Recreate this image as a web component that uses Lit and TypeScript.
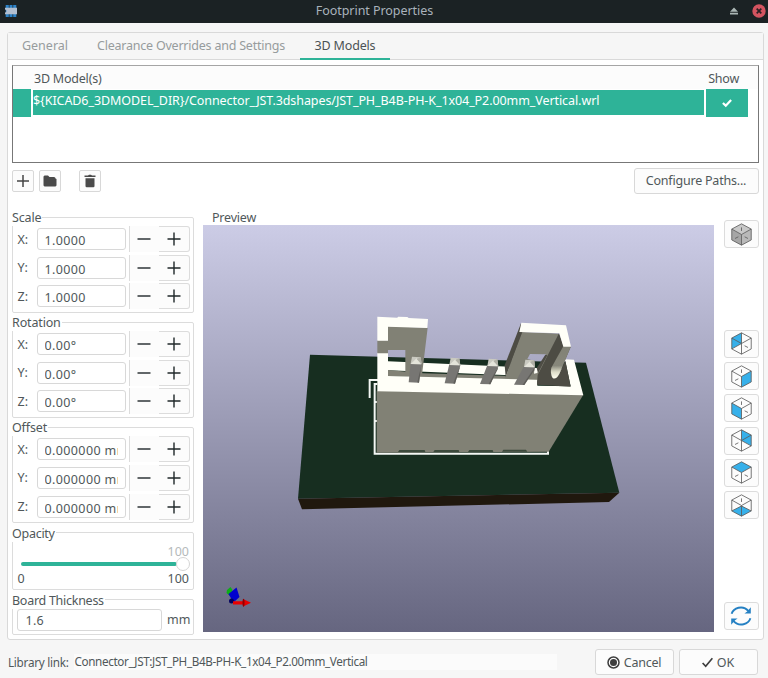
import { LitElement, html, svg, css } from "lit";
import { customElement, property } from "lit/decorators.js";

type Face = "solid" | "backLeft" | "right" | "left" | "backRight" | "top" | "bottom" | "refresh";

const FACES: Record<string, string> = {
  backLeft: "M.7 5.8 10 .8V11L.7 16Z",
  right: "M10 11 19.3 5.8V16.2L10 21.2Z",
  left: "M.7 5.8 10 11V21.2L.7 16.2Z",
  backRight: "M10 .8 19.3 5.8V16L10 11Z",
  top: "M10 .8 19.3 5.8 10 11 .7 5.8Z",
  bottom: "M.7 16.2 10 11.5 19.3 16.2 10 21.2Z",
};
const TOP_MARK = "M10 4.2V7.6";
const LEFT_MARK = "M3.800 14.800 7 13.200";
const RIGHT_MARK = "M16.200 14.800 13 13.200";
const MARKS: Record<string, string> = {
  solid: TOP_MARK + LEFT_MARK + RIGHT_MARK,
  backLeft: RIGHT_MARK,
  right: TOP_MARK + LEFT_MARK,
  left: TOP_MARK + RIGHT_MARK,
  backRight: LEFT_MARK,
  top: LEFT_MARK + RIGHT_MARK,
  bottom: TOP_MARK,
};
const FRONT_EDGES = "M.7 5.8 10 11 19.3 5.8M10 11V21.2";
const BACK_EDGES: Record<string, string> = {
  backLeft: "M.7 16.2 10 11V.8",
  backRight: "M19.3 16.2 10 11V.8",
  bottom: "M.7 16.2 10 11.500 19.3 16.2",
};

@customElement("view-button")
class ViewButton extends LitElement {
  @property() face: Face = "solid";
  static styles = css`
    :host { display: block; }
    .btn { box-sizing: border-box; width: 35px; height: 28px; border: 1px solid #dcdcdc; border-radius: 3px; background: #fcfcfc; display: flex; align-items: center; justify-content: center; }
    .edge { fill: none; stroke: #5c5c5c; stroke-width: 0.8; stroke-linejoin: round; }
    .mark { fill: none; stroke: #5c5c5c; stroke-width: 0.8; }
    .blue { fill: #36b0ea; }
    .lt { fill: #c8c8c8; }
    .md { fill: #a6a6a6; }
    .dk { fill: #b9b9b9; }
    .arc { fill: none; stroke: #2580c3; stroke-width: 1.9; }
    .tip { fill: #2580c3; }
  `;
  render() {
    if (this.face === "refresh") {
      return html`<div class="btn"><svg width="22" height="22" viewBox="0 0 22 22">
        <path class="arc" d="M1.6 8.8C3.4 3.2 12.5-.8 18.6 6.2M20.4 13.2C18.6 18.8 9.5 22.8 3.4 15.8" />
        <path class="tip" d="M20.8 2.2V8.4H14.4L17.2 6.6ZM1.2 19.8V13.6H7.6L4.8 15.4Z" />
      </svg></div>`;
    }
    const back = BACK_EDGES[this.face];
    return html`<div class="btn"><svg width="21" height="23" viewBox="0 0 20 22">
      ${this.face === "solid"
        ? svg`<path class="lt" d=${FACES.top}/><path class="md" d=${FACES.left}/><path class="dk" d=${FACES.right}/>`
        : svg`<path class="blue" d=${FACES[this.face]}/>`}
      <path class="edge" d="M10 .8 19.3 5.8V16.2L10 21.2 .7 16.2V5.8Z" />
      <path class="edge" d=${FRONT_EDGES} />
      ${back ? svg`<path class="edge" d=${back}/>` : ""}
      <path class="mark" d=${MARKS[this.face]} />
    </svg></div>`;
  }
}

@customElement("axis-group")
class AxisGroup extends LitElement {
  @property() label = "";
  @property() value = "";
  static styles = css`
    :host { display: block; }
    fieldset { box-sizing: border-box; width: 182px; height: 104.5px; margin: 0; padding: 0; border: 1px solid #dcdcdc; border-radius: 2px; min-width: 0; }
    legend { padding: 0 1px 0 0; margin-left: -0.5px; height: 18px; line-height: 20px; letter-spacing: -0.15px; }
    .rows { display: flex; flex-direction: column; gap: 2.6px; }
    .row { display: flex; height: 26px; align-items: center; }
    .axis { width: 19px; margin-left: 5px; line-height: 19px; }
    .field { box-sizing: border-box; width: 89px; height: 22px; border: 1px solid #d8d8d8; border-radius: 3px; background: #fff; padding: 0 7px; line-height: 23.5px; letter-spacing: 0.38px; }
    .clip { overflow: hidden; white-space: nowrap; height: 20px; }
    .step { box-sizing: border-box; height: 26px; display: flex; align-items: center; justify-content: center; background: #fcfcfc; }
    .minus { width: 30px; margin-left: 3px; border-left: 1px solid #dcdcdc; }
    .plus { width: 31px; border: 1px solid #dcdcdc; border-left: 0; border-radius: 0 3px 3px 0; }
    path { stroke: #20282a; stroke-width: 1.4; }
  `;
  render() {
    return html`<fieldset><legend>${this.label}</legend><div class="rows">
      ${["X:", "Y:", "Z:"].map((a) => html`<div class="row">
        <span class="axis">${a}</span>
        <div class="field"><div class="clip">${this.value}</div></div>
        <div class="step minus"><svg width="14" height="14"><path d="M.5 7H13.5" /></svg></div>
        <div class="step plus"><svg width="14" height="14"><path d="M.5 7H13.5M7 .5V13.5" /></svg></div>
      </div>`)}
    </div></fieldset>`;
  }
}

@customElement("model-preview")
class ModelPreview extends LitElement {
  static styles = css`
    :host { display: block; width: 511.5px; height: 407px; background: linear-gradient(#cccce6, #666680); }
    svg { display: block; }
    .board { fill: #172e20; }
    .side { fill: #20180e; }
    .white { fill: #fffff8; }
    .grey { fill: #818175; }
    .dark { fill: #4d4c44; }
    .pin { fill: #777673; }
    .pinside { fill: #5f5e5a; }
    .tip { fill: #c9c9c0; }
    .tiphi { fill: #e4e4da; }
    .tiplo { fill: #b0b0a6; }
    .silk { fill: none; stroke: #f4f7f4; stroke-width: 6; }
    .shade { fill: #3c4a3c; }
  `;
  pin(tx: number, ty: number, bx: number, by: number) {
    return svg`
      <path class="pin" d="M${tx} ${ty + 20}L${tx + 33} ${ty + 22}L${bx + 31} ${by + 1}L${bx} ${by}Z"/>
      <path class="pinside" d="M${tx + 33} ${ty + 22}L${tx + 31} ${ty + 32}L${bx + 31} ${by + 1}L${bx + 26} ${by}Z"/>
      <path class="tip" d="M${tx + 4} ${ty}L${tx + 30} ${ty + 2}L${tx + 33} ${ty + 23}L${tx} ${ty + 22}Z"/>
      <path class="tiphi" d="M${tx + 18} ${ty + 5}L${tx + 31} ${ty + 23}L${tx} ${ty + 22}Z"/>
      <path class="tiplo" d="M${tx + 30} ${ty + 2}L${tx + 18} ${ty + 7}L${tx + 33} ${ty + 23}Z"/>`;
  }
  render() {
    return html`<svg width="511.5" height="407" viewBox="203 225 511.5 407">
      <defs><linearGradient id="tongue" x1="0" y1="0" x2="0" y2="1">
        <stop offset="0" stop-color="#818175" /><stop offset=".6" stop-color="#87877b" /><stop offset=".8" stop-color="#ddddc8" /><stop offset="1" stop-color="#fffff0" />
      </linearGradient></defs>
      <g transform="translate(290 300) scale(.33333)">
        <path class="board" d="M60 164 888 188 988 578 24 596Z" />
        <path class="side" d="M24 596 988 578 957 606 36 628Z" />
        <path class="silk" d="M239 294V240H264M262 252H254V461H774V444M254 306H262M254 363H262" />
        <path class="grey" d="M260 272 880 284 776 455 260 458Z" />
        <path class="shade" d="M328 450H404L406 456H324ZM434 450H506L508 456H430ZM538 450H608L610 456H534ZM640 449H708L712 455H636Z" />
        <path class="white" d="M294 184 826 208 824 232 294 211Z" />
        <path class="grey" d="M294 210 400 220 760 231V242L294 229Z" />
        <path class="white" d="M262 158H294V228L742 239 742 257 842 259 825 178 852 179 880 286 262 274Z" />
        <path class="grey" d="M262 121H294V79L413 83 396 224 346 220V150H294V160H262Z" />
        <path class="white" d="M262 50 322 53 324 50 352 51 356 54 414 57 412 84 294 80V122H262Z" />
        <path class="dark" d="M693 70 699 97 647 232 644 196Z" />
        <path class="grey" fill-rule="evenodd" d="M697 96 808 101 742 238 645 235ZM720 162 768 163 742 219 732 221 735 183 712 177Z" />
        <path class="dark" d="M766 164 772 166 744 219 740 204Z" />
        <path class="dark" d="M807 100 821 139 843 139 806 225 826 182 842 260 741 254 743 225Z" />
        <path fill="url(#tongue)" d="M820 139 843 139 808 222Q798 240 788 234Q780 222 784 203Z" />
        <path class="white" d="M694 68 828 76 843 140 820 140 808 100 688 96Z" />
        ${this.pin(362, 170, 356, 247)}${this.pin(478, 173, 464, 250)}${this.pin(592, 176, 570, 252)}${this.pin(702, 179, 672, 254)}
      </g>
      <path fill="#0cae16" d="M227 590 230.500 587 232.500 590 230 596 226.500 593Z" />
      <path fill="#0000cf" d="M228.500 594 236.500 587.500 239.500 597 233.500 602.500Z" />
      <circle cx="231.500" cy="601" r="2.500" fill="#00005f" />
      <path fill="#e80000" d="M233 601.300H243V599L251 602.700 243 606.500V604.500H233Z" />
      <ellipse cx="243.500" cy="602.700" rx="1" ry="4" fill="#8d0000" />
    </svg>`;
  }
}

@customElement("app-root")
class AppRoot extends LitElement {
  static styles = css`
    :host { display: flex; flex-direction: column; width: 768px; height: 678px; overflow: hidden; background: #f6f6f6; color: #50585a; font: 12.5px/18px "Noto Sans", sans-serif; white-space: nowrap; }
    .title { display: flex; align-items: center; height: 22.5px; background: #1b2224; color: #a9b2bc; }
    .title .chip { margin-left: 5px; }
    .title .name { flex: 1; text-align: center; padding-left: 2px; letter-spacing: -0.05px; line-height: 20px; margin-top: -0.5px; }
    .title .eject { margin-right: 14px; margin-left: 0; }
    .title .close { margin-right: 2px; }
    .book { box-sizing: border-box; width: 757.5px; height: 608px; margin: 9.5px 0 0 6.500px; border: 1px solid #d9d9d9; border-radius: 3px; background: #fff; }
    .tabs { display: flex; height: 26px; background: #f6f6f6; border-bottom: 1px solid #d9d9d9; color: #979c9d; line-height: 25px; }
    .tab { box-sizing: border-box; height: 27px; text-align: center; }
    .t1 { width: 75px; }
    .t2 { width: 217px; letter-spacing: -0.22px; }
    .t3 { width: 90px; margin-left: 0.500px; border-bottom: 2px solid #2eb398; color: #4b5254; letter-spacing: -0.17px; }
    .body { padding: 4.500px 4px 0; }
    .grid { box-sizing: border-box; width: 747px; height: 98.500px; border: 1px solid #777; border-top-color: #a5a5a5; background: #fff; }
    .head { display: flex; justify-content: space-between; height: 23px; line-height: 25px; background: #fcfcfc; padding: 0 18.500px 0 21.500px; letter-spacing: -0.22px; }
    .sel { display: flex; height: 28px; gap: 2px; align-items: center; color: #fff; }
    .sel > * { background: #2eb398; }
    .c1 { width: 18.500px; height: 28px; }
    .c2 { width: 671px; height: 24.500px; line-height: 21px; letter-spacing: -0.077px; }
    .c3 { width: 41.500px; height: 28px; display: flex; align-items: center; justify-content: center; }
    .tools { display: flex; align-items: center; height: 26px; margin-top: 4.500px; width: 747px; }
    .tool { box-sizing: border-box; width: 22px; height: 22px; border: 1px solid #d8d8d8; border-radius: 2px; background: #fcfcfc; display: flex; align-items: center; justify-content: center; margin-right: 5px; }
    .trash { margin-left: 13.500px; }
    .btn { box-sizing: border-box; height: 26px; border: 1px solid #d8d8d8; border-radius: 3px; background: #fcfcfc; display: flex; align-items: center; justify-content: center; gap: 3.500px; padding-top: 1.500px; }
    .btn svg { margin-top: -1px; }
    .paths { width: 125px; margin-left: auto; letter-spacing: -0.21px; }
    .main { display: flex; margin-top: 14.500px; }
    .side { display: flex; flex-direction: column; gap: 0.700px; width: 182px; }
    fieldset { box-sizing: border-box; width: 182px; margin: 0; padding: 0; border: 1px solid #dcdcdc; border-radius: 2px; min-width: 0; }
    legend { padding: 0 1px 0 0; margin-left: -0.5px; height: 18px; line-height: 20px; letter-spacing: -0.27px; }
    .opacity { height: 66.500px; }
    .board { height: 44px; }
    .nums { display: flex; justify-content: space-between; padding: 0 3.500px 0 5px; line-height: 20px; height: 18px; }
    .now { justify-content: flex-end; color: #b5babb; }
    .slider { display: flex; align-items: center; height: 9px; padding-left: 8px; }
    .fill { width: 156px; height: 4px; border-radius: 2px; background: #2eb398; }
    .knob { box-sizing: border-box; width: 14px; height: 14px; margin-left: -1px; border: 1px solid #d5d5d5; border-radius: 50%; background: #fff; }
    .thick { display: flex; align-items: center; gap: 5.500px; padding-left: 4px; margin-top: -1px; height: 24px; }
    .input { box-sizing: border-box; width: 145px; height: 22px; border: 1px solid #d8d8d8; border-radius: 3px; padding-left: 8px; line-height: 22px; letter-spacing: 0.3px; }
    .mid { margin-left: 9px; width: 511.500px; }
    .cap { padding-left: 9.500px; height: 17px; line-height: 20px; letter-spacing: -0.2px; }
    .views { margin: 12px 0 0 9.500px; display: flex; flex-direction: column; gap: 4.300px; }
    .gap1 { margin-bottom: 77.500px; }
    .gap2 { margin-top: 78px; }
    .foot { display: flex; align-items: center; margin: 9px 0 0 8px; height: 26px; }
    .lib { font-size: 11.7px; letter-spacing: -0.26px; width: 60.500px; line-height: 16px; }
    .link { box-sizing: border-box; width: 483.500px; height: 16px; line-height: 15px; margin-left: 5px; padding-left: 1px; background: #fbfbfb; font-size: 11.7px; letter-spacing: -0.37px; }
    .cancel { width: 78.500px; margin-left: 38px; letter-spacing: -0.25px; }
    .ok { width: 79px; margin-left: 5px; gap: 4px; }
  `;
  render() {
    return html`
      <div class="title">
        <svg class="chip" width="12" height="14" viewBox="0 0 12 14"><path fill="#2d83c8" d="M.7 1H3.800V13H.7ZM4.500 1H7.500V13H4.500ZM8.200 1H11.300V13H8.200Z" /><path fill="#b2bfd0" d="M0 3.800H12V10.200H0V8.500A1.500 1.500 0 0 0 0 5.500Z" /></svg>
        <span class="name">Footprint Properties</span>
        <svg class="eject" width="8" height="8" viewBox="0 0 8 8"><path fill="#aab6b4" d="M4 .5 8 4.800H0ZM0 5.800H8V7.500H0Z" /></svg>
        <svg class="close" width="14" height="14" viewBox="0 0 14 14"><circle cx="7" cy="7" r="6.700" fill="#d35460" /><path d="M4.700 4.700 9.300 9.300M9.300 4.700 4.700 9.300" stroke="#2a2024" stroke-width="1.700" /></svg>
      </div>
      <div class="book">
        <div class="tabs"><div class="tab t1">General</div><div class="tab t2">Clearance Overrides and Settings</div><div class="tab t3">3D Models</div></div>
        <div class="body">
          <div class="grid">
            <div class="head"><span>3D Model(s)</span><span>Show</span></div>
            <div class="sel"><div class="c1"></div><div class="c2">\${KICAD6_3DMODEL_DIR}/Connector_JST.3dshapes/JST_PH_B4B-PH-K_1x04_P2.00mm_Vertical.wrl</div>
              <div class="c3"><svg width="10" height="10" viewBox="0 0 9 9"><path d="M.8 4.500 3.400 6.900 8.200 1.800" fill="none" stroke="#fff" stroke-width="2" /></svg></div></div>
          </div>
          <div class="tools">
            <div class="tool"><svg width="14" height="14"><path d="M1 7H13M7 1V13" stroke="#454545" stroke-width="1.500" /></svg></div>
            <div class="tool"><svg width="14" height="12" viewBox="0 0 14 12"><path fill="#4a4a4a" d="M1.500.5H5L6.500 2H11Q12.500 2 12.500 3.500L13.500 4V10.500L12.500 11.500H1.500L.5 10.500V1.500Z" /></svg></div>
            <div class="tool trash"><svg width="12" height="14" viewBox="0 0 12 14"><path fill="#4a4a4a" d="M.5 1.500H4L5 .7H7L8 1.500H11.500V3H.5ZM1.500 4.200H10.500V12Q10.500 13.200 9.300 13.200H2.700Q1.500 13.200 1.500 12Z" /></svg></div>
            <div class="btn paths">Configure Paths...</div>
          </div>
          <div class="main">
            <div class="side">
              <axis-group label="Scale" value="1.0000"></axis-group>
              <axis-group label="Rotation" value="0.00°"></axis-group>
              <axis-group label="Offset" value="0.000000 mm"></axis-group>
              <fieldset class="opacity"><legend>Opacity</legend>
                <div class="nums now">100</div>
                <div class="slider"><div class="fill"></div><div class="knob"></div></div>
                <div class="nums"><span>0</span><span>100</span></div>
              </fieldset>
              <fieldset class="board"><legend>Board Thickness</legend>
                <div class="thick"><div class="input">1.6</div><span>mm</span></div>
              </fieldset>
            </div>
            <div class="mid"><div class="cap">Preview</div><model-preview></model-preview></div>
            <div class="views">
              <view-button class="gap1" face="solid"></view-button>
              <view-button face="backLeft"></view-button>
              <view-button face="right"></view-button>
              <view-button face="left"></view-button>
              <view-button face="backRight"></view-button>
              <view-button face="top"></view-button>
              <view-button face="bottom"></view-button>
              <view-button class="gap2" face="refresh"></view-button>
            </div>
          </div>
        </div>
      </div>
      <div class="foot">
        <span class="lib">Library link:</span><div class="link">Connector_JST:JST_PH_B4B-PH-K_1x04_P2.00mm_Vertical</div>
        <div class="btn cancel"><svg width="13" height="13" viewBox="0 0 13 13"><circle cx="6.500" cy="6.500" r="5.500" fill="none" stroke="#3d3d3d" stroke-width="1.500" /><circle cx="6.500" cy="6.500" r="3.500" fill="#3d3d3d" /></svg>Cancel</div>
        <div class="btn ok"><svg width="11" height="11" viewBox="0 0 11 11"><path d="M.6 6 3.700 9.300 10.400 1.200" fill="none" stroke="#3d3d3d" stroke-width="1.700" /></svg>OK</div>
      </div>`;
  }
}
